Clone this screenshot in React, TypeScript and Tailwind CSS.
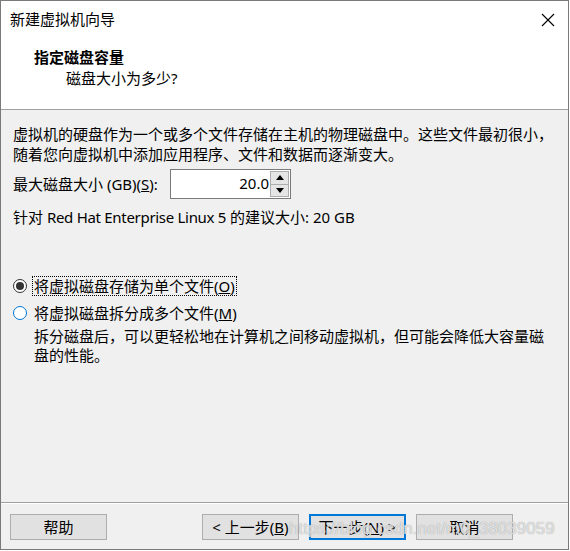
import React from "react";

const font = {
  fontFamily: '"Noto Sans", "Noto Sans CJK SC", sans-serif',
};

const Radio = ({ checked }: { checked: boolean }) =>
  checked ? (
    <span className="flex size-[14px] shrink-0 items-center justify-center rounded-full border border-[#333333] bg-white">
      <span className="size-[8px] rounded-full bg-[#333333]" />
    </span>
  ) : (
    <span className="size-[14px] shrink-0 rounded-full border border-[#0078d7] bg-white" />
  );

const Button = ({
  children,
  primary = false,
}: {
  children: React.ReactNode;
  primary?: boolean;
}) => (
  <button
    type="button"
    className={`flex h-[26px] w-[97px] items-center justify-center bg-[#e1e1e1] text-[15px] leading-none text-black ${
      primary ? "border-2 border-[#0078d7]" : "border border-[#adadad]"
    }`}
  >
    {children}
  </button>
);

export default function App() {
  return (
    <div className="h-[551px] w-[570px] bg-white" style={font}>
      <div className="relative flex h-[550px] w-[569px] flex-col border border-[#7a7a7a] bg-[#f0f0f0] text-black">
        {/* title + header */}
        <div className="h-[109px] shrink-0 border-b border-[#a0a0a0] bg-white">
          <div className="flex h-[36px] items-center justify-between pl-[9px] pr-[13px]">
            <span className="text-[15px] leading-[20px]">新建虚拟机向导</span>
            <svg width="14" height="14" viewBox="0 0 14 14" className="mt-[1px]">
              <path d="M1 1 L13 13 M13 1 L1 13" stroke="#000" strokeWidth="1.1" />
            </svg>
          </div>
          <div className="mt-[10px] pl-[33px] text-[15px] font-bold leading-[20px]">
            指定磁盘容量
          </div>
          <div className="mt-[1px] pl-[65px] text-[15px] leading-[21px]">
            磁盘大小为多少?
          </div>
        </div>

        {/* body */}
        <div className="flex flex-1 flex-col px-[12px] text-[15px]">
          <p className="mt-[14px] leading-[20px]">
            虚拟机的硬盘作为一个或多个文件存储在主机的物理磁盘中。这些文件最初很小，
            <br />
            随着您向虚拟机中添加应用程序、文件和数据而逐渐变大。
          </p>

          <div className="mt-[5px] flex h-[30px] items-center">
            <span className="w-[157px] leading-[20px]">
              最大磁盘大小 (GB)(<span className="underline">S</span>):
            </span>
            <div className="flex h-[30px] w-[121px] border border-[#7a7a7a] bg-white">
              <span className="flex-1 pr-[1px] pt-[3px] text-right leading-[20px]">
                20.0
              </span>
              <div className="my-[1px] mr-[1px] flex w-[19px] flex-col border border-[#adadad]">
                <div className="flex flex-1 items-center justify-center border-b border-[#adadad] bg-[#e5e5e5]">
                  <svg width="8" height="5" viewBox="0 0 8 5">
                    <path d="M0 5 L4 0 L8 5 Z" fill="#000" />
                  </svg>
                </div>
                <div className="flex flex-1 items-center justify-center bg-[#e5e5e5]">
                  <svg width="8" height="5" viewBox="0 0 8 5">
                    <path d="M0 0 L8 0 L4 5 Z" fill="#000" />
                  </svg>
                </div>
              </div>
            </div>
          </div>

          <p className="mt-[8px] leading-[20px]">
            针对{" "}
            <span className="tracking-[-0.3px]">Red Hat Enterprise Linux 5</span>{" "}
            的建议大小: 20 GB
          </p>

          <div className="mt-[49px] flex h-[20px] items-center gap-[5px]">
            <Radio checked />
            <span className="border border-dotted border-black px-[1px] leading-[18px]">
              将虚拟磁盘存储为单个文件(<span className="underline">O</span>)
            </span>
          </div>

          <div className="mt-[7px] flex h-[20px] items-center gap-[7px]">
            <Radio checked={false} />
            <span className="leading-[20px]">
              将虚拟磁盘拆分成多个文件(<span className="underline">M</span>)
            </span>
          </div>

          <p className="mt-[4px] pl-[21px] leading-[19px]">
            拆分磁盘后，可以更轻松地在计算机之间移动虚拟机，但可能会降低大容量磁
            <br />
            盘的性能。
          </p>
        </div>

        {/* footer */}
        <div className="h-[47px] shrink-0 border-t border-[#a0a0a0]">
          <div className="flex items-center border-t border-white pt-[10px] pl-[9px]">
            <Button>帮助</Button>
            <div className="ml-[95px] flex gap-[10px]">
              <Button>
                &lt; 上一步(<span className="underline">B</span>)
              </Button>
              <Button primary>
                下一步(<span className="underline">N</span>) &gt;
              </Button>
              <Button>取消</Button>
            </div>
          </div>
        </div>

        {/* watermark over the screenshot */}
        <span
          className="pointer-events-none absolute left-[288px] top-[515px] text-[17px] text-white/70"
          style={{ fontFamily: '"Liberation Sans", sans-serif', textShadow: "0 0 1px #8a8a8a" }}
        >
          https://blog.csdn.net/m0_38039059
        </span>
      </div>
    </div>
  );
}
